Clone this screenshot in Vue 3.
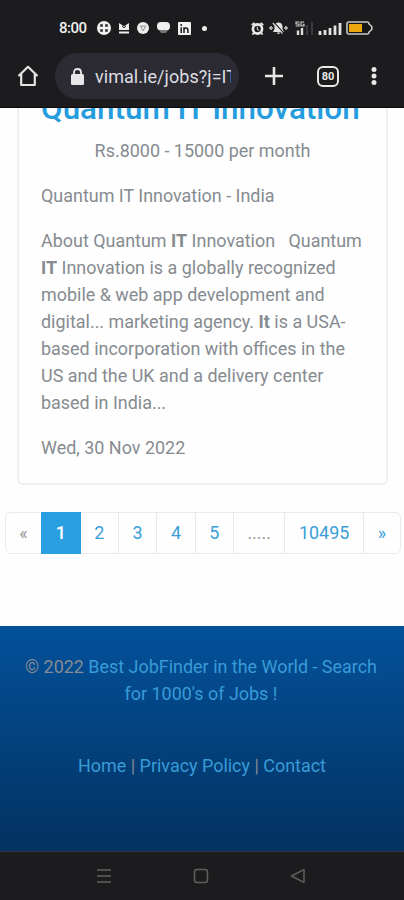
<script setup>
const job = {
  title: 'Quantum IT Innovation',
  salary: 'Rs.8000 - 15000 per month',
  company: 'Quantum IT Innovation - India',
  date: 'Wed, 30 Nov 2022',
}

const pages = [
  { label: '«', type: 'prev' },
  { label: '1', type: 'active' },
  { label: '2', type: 'page' },
  { label: '3', type: 'page' },
  { label: '4', type: 'page' },
  { label: '5', type: 'page' },
  { label: '.....', type: 'dots' },
  { label: '10495', type: 'last' },
  { label: '»', type: 'next' },
]
</script>

<template>
  <div class="phone">
    <header class="chrome">
      <!-- status bar -->
      <div class="status">
        <span class="status__time">8:00</span>
        <div class="status__apps">
          <svg width="14" height="14" viewBox="0 0 14 14">
            <circle cx="7" cy="7" r="7" fill="#f0f0f0" />
            <path d="M3.2 3.2h2.6v2.6H3.2zM8.2 3.2h2.6v2.6H8.2zM3.2 8.2h2.6v2.6H3.2zM8.2 8.2h2.6v2.6H8.2z" fill="#2a2a2c" />
          </svg>
          <svg width="10" height="11" viewBox="0 0 10 11">
            <path d="M0 0l3 2 2 1.5L7 2l3-2v7H0z" fill="#eee" />
            <path d="M3 3l2 2 2-2" fill="none" stroke="#333" />
            <path d="M0 9.5h10" stroke="#eee" stroke-width="2" />
          </svg>
          <svg width="12" height="12" viewBox="0 0 12 12">
            <circle cx="6" cy="6" r="6" fill="#eee" />
            <path d="M3 4h6M3.5 4L6 9l3-5" fill="none" stroke="#999" />
            <circle cx="6" cy="6" r="1.6" fill="#eee" stroke="#999" stroke-width=".7" />
          </svg>
          <svg width="13" height="12" viewBox="0 0 13 12">
            <rect width="13" height="8.5" rx="4" fill="#f0f0f0" />
            <path d="M2 8h9l-2 3H4z" fill="#777" />
          </svg>
          <svg width="13" height="13" viewBox="0 0 13 13">
            <rect width="13" height="13" rx="1" fill="#f4f4f4" />
            <path d="M3.2 5.2V11M6 11V5.2M6 7.8q0-1.8 1.9-1.8T9.9 8v3" fill="none" stroke="#1c1c1e" stroke-width="1.5" />
            <circle cx="3.2" cy="3" r="1" fill="#1c1c1e" />
          </svg>
          <span class="status__dot"></span>
        </div>
        <div class="status__system">
          <svg class="alarm" width="13" height="13" viewBox="0 0 13 13">
            <circle cx="6.5" cy="7" r="4.6" fill="none" stroke="#ececec" stroke-width="2.6" />
            <path d="M.7 3L3.5.8M12.3 3L9.5.8M2.5 11l-1 1.7M10.5 11l1 1.7" stroke="#ececec" stroke-width="1.6" />
            <path d="M6.3 4.5v3l2 1" fill="none" stroke="#ececec" />
          </svg>
          <svg class="mute" width="19" height="14" viewBox="0 0 19 14">
            <path d="M4 11L5.5 8V5.2Q6 1.6 9.5 1.4q3.5.2 4 3.8V8l1.5 3zM8 11.5h3q-.3 1.5-1.5 1.5T8 11.5z" fill="#e4e4e4" />
            <path d="M0 7h4M15 7h4M2 5v4M17 5v4" fill="none" stroke="#bbb" stroke-width="1.6" />
            <path d="M4.8 1.2l10 11" stroke="#1c1c1e" stroke-width="1.1" />
            <path d="M3.8 2l9.7 10.7" stroke="#ddd" stroke-width="1.2" />
          </svg>
          <svg class="mobile" width="19" height="14" viewBox="0 0 19 14">
            <path d="M4.5 1H1v2h3v2H.8M9 1H6v4h3V3.3H7.8" fill="none" stroke="#d4d4d4" stroke-width="1.1" />
            <path d="M3 9.5V14M7 7v7" stroke="#dedede" stroke-width="2.4" />
            <path d="M12 4v10M17 1v13" stroke="#3a3a3c" stroke-width="2" />
          </svg>
          <svg class="signal" width="24" height="13" viewBox="0 0 24 13">
            <path d="M2 9v4M7 8v5M12 6v7M17 3.5V13M22 1v12" stroke="#e2e2e2" stroke-width="2.8" />
          </svg>
          <svg width="27" height="14" viewBox="0 0 27 14">
            <path d="M3 1h18q2 0 2 2l2.8 2.5v3L23 11q0 2-2 2H3q-2 0-2-2V3q0-2 2-2z" fill="#171717" stroke="#c9c9c9" stroke-width="1.6" />
            <path d="M3 3h13v8H3z" fill="#eba70c" />
          </svg>
        </div>
      </div>

      <!-- address bar -->
      <div class="toolbar">
        <svg class="home" width="22" height="22" viewBox="0 0 22 22">
          <path d="M1.5 11L11 1.8l9.5 9.2M4.2 9v11h13.6V9" fill="none" stroke="#e4e4e4" stroke-width="2.2" stroke-linejoin="round" />
        </svg>
        <div class="omnibox">
          <svg width="13" height="17" viewBox="0 0 13 17">
            <rect y="6" width="13" height="11" rx="1.5" fill="#e7e7ea" />
            <path d="M3 7V4.5Q3 1 6.5 1T10 4.5V7" fill="none" stroke="#e7e7ea" stroke-width="1.8" />
          </svg>
          <span class="omnibox__url">vimal.ie/jobs?j=IT</span>
        </div>
        <svg class="plus" width="18" height="18" viewBox="0 0 18 18">
          <path d="M9 0v18M0 9h18" stroke="#e8e8e8" stroke-width="2.6" />
        </svg>
        <span class="tabs">80</span>
        <svg width="6" height="18" viewBox="0 0 6 18">
          <circle cx="3" cy="2.5" r="2.5" fill="#e8e8e8" />
          <circle cx="3" cy="9" r="2.5" fill="#e8e8e8" />
          <circle cx="3" cy="15.5" r="2.5" fill="#e8e8e8" />
        </svg>
      </div>
    </header>

    <main class="page">
      <article class="job">
        <div class="job__head">
          <h2 class="job__title">{{ job.title }}</h2>
        </div>
        <p class="job__salary">{{ job.salary }}</p>
        <p class="job__company">{{ job.company }}</p>
        <p class="job__text">
          About Quantum <b>IT</b> Innovation &nbsp; Quantum<br />
          <b>IT</b> Innovation is a globally recognized<br />
          mobile &amp; web app development and<br />
          digital... marketing agency. <b>It</b> is a USA-<br />
          based incorporation with offices in the<br />
          US and the UK and a delivery center<br />
          based in India...
        </p>
        <p class="job__date">{{ job.date }}</p>
      </article>

      <ul class="pager">
        <li v-for="p in pages" :key="p.label" class="pager__item" :class="'is-' + p.type">
          {{ p.label }}
        </li>
      </ul>
    </main>

    <footer class="footer">
      <p class="footer__copy">
        © 2022 <a>Best JobFinder in the World - Search<br />for 1000's of Jobs !</a>
      </p>
      <p class="footer__links"><a>Home</a> | <a>Privacy Policy</a> | <a>Contact</a></p>
    </footer>

    <!-- android navigation -->
    <nav class="softkeys">
      <svg width="16" height="16" viewBox="0 0 16 16">
        <path d="M1 2h14M1 8h14M1 14h14" stroke="#606060" stroke-width="1.6" />
      </svg>
      <svg width="16" height="16" viewBox="0 0 16 16">
        <rect x="1.5" y="1.5" width="13" height="13" rx="2.5" fill="none" stroke="#606060" stroke-width="1.5" />
      </svg>
      <svg width="16" height="16" viewBox="0 0 16 16">
        <path d="M1.5 8L14 1.7v12.6z" fill="none" stroke="#606060" stroke-width="1.5" stroke-linejoin="round" />
      </svg>
    </nav>
  </div>
</template>

<style>
body {
  margin: 0;
  background: #fff;
}
</style>

<style scoped>
.phone {
  display: flex;
  flex-direction: column;
  width: 404px;
  height: 900px;
  overflow: hidden;
  background: #fefefe;
  font-family: Roboto, 'Liberation Sans', sans-serif;
  font-size: 17.95px;
  line-height: 27px;
  color: #868b90;
}
.phone svg {
  display: block;
  flex: none;
}
p,
h2 {
  margin: 0;
  white-space: nowrap;
}
.chrome {
  box-sizing: border-box;
  flex: none;
  height: 108px;
  background: #1c1c1e;
  border-bottom: 1px solid #0c0c0d;
}
.status {
  display: flex;
  align-items: center;
  height: 28px;
  padding: 14px 31px 0 59px;
}
.status__time {
  width: 38px;
  font-size: 15px;
  letter-spacing: -0.5px;
  font-weight: 500;
  color: #f0f0f0;
}
.status__apps {
  display: flex;
  align-items: center;
  gap: 8px;
}
.status__dot {
  width: 5px;
  height: 5px;
  margin-left: 3px;
  border-radius: 50%;
  background: #eee;
}
.status__system {
  display: flex;
  align-items: center;
  margin-left: auto;
}
.alarm {
  margin-right: 5px;
}
.mute {
  margin-right: 7px;
}
.mobile {
  margin-right: 4px;
}
.signal {
  margin-right: 4px;
}
.toolbar {
  display: flex;
  align-items: center;
  height: 46px;
  padding: 11px 27px 0 17px;
}
.omnibox {
  box-sizing: border-box;
  display: flex;
  align-items: center;
  width: 184px;
  height: 46px;
  margin: 0 26px 0 16px;
  padding-left: 16px;
  border-radius: 23px;
  background: #2c2b33;
}
.omnibox__url {
  width: 136px;
  margin-left: 11px;
  overflow: hidden;
  white-space: nowrap;
  font-size: 18px;
  letter-spacing: 0.05px;
  color: #dddde2;
}
.tabs {
  box-sizing: border-box;
  width: 22px;
  height: 21px;
  margin: 0 auto 0 34px;
  border: 2px solid #e8e8e8;
  border-radius: 6px;
  text-align: center;
  font-size: 11px;
  font-weight: 700;
  line-height: 17px;
  color: #e8e8e8;
}
.page {
  flex: none;
  height: 518px;
}
.job {
  box-sizing: border-box;
  width: 371px;
  height: 377px;
  margin-left: 17px;
  padding: 0 22px;
  border: 2px solid #f0f0f1;
  border-top: 0;
  border-radius: 0 0 6px 6px;
}
/* the title is scrolled halfway under the toolbar */
.job__head {
  display: flex;
  align-items: flex-end;
  height: 29px;
  overflow: hidden;
}
.job__title {
  margin-bottom: 10px;
  font-size: 31.4px;
  font-weight: 500;
  line-height: 36px;
  color: #259cdd;
}
.job__salary {
  text-align: center;
}
.job__company,
.job__text,
.job__date {
  margin-top: 18px;
}
.job b {
  font-weight: 700;
}
.pager {
  box-sizing: border-box;
  display: flex;
  width: 396px;
  height: 42px;
  margin: 27px 0 0 5px;
  padding: 0;
  list-style: none;
  border: 1px solid #e8eaec;
  border-radius: 6px;
}
.pager__item {
  box-sizing: border-box;
  width: 38.4px;
  border-right: 1px solid #e8eaec;
  text-align: center;
  line-height: 40px;
  color: #3a9fd8;
}
.pager__item.is-prev {
  width: 35px;
  border: 0;
  color: #999;
}
.pager__item.is-active {
  width: 39.5px;
  margin: -1px 0;
  border: 0;
  background: #299fe2;
  line-height: 42px;
  font-weight: 500;
  color: #fff;
}
.pager__item.is-dots {
  width: 51.3px;
  color: #999;
}
.pager__item.is-last {
  width: 78.6px;
}
.pager__item.is-next {
  flex: 1;
  border: 0;
}
.footer {
  box-sizing: border-box;
  flex: none;
  height: 225px;
  padding-top: 27px;
  background: linear-gradient(#03519b, #033260);
  text-align: center;
  color: #858b94;
}
.footer a {
  color: #389bd8;
}
.footer__copy {
  margin-left: -2px;
}
.footer__links {
  margin-top: 45px;
}
.softkeys {
  box-sizing: border-box;
  flex: 1;
  display: flex;
  gap: 81px;
  padding: 16px 0 0 96px;
  border-top: 1px solid #34344a;
  background: #1c1c1e;
}
</style>
